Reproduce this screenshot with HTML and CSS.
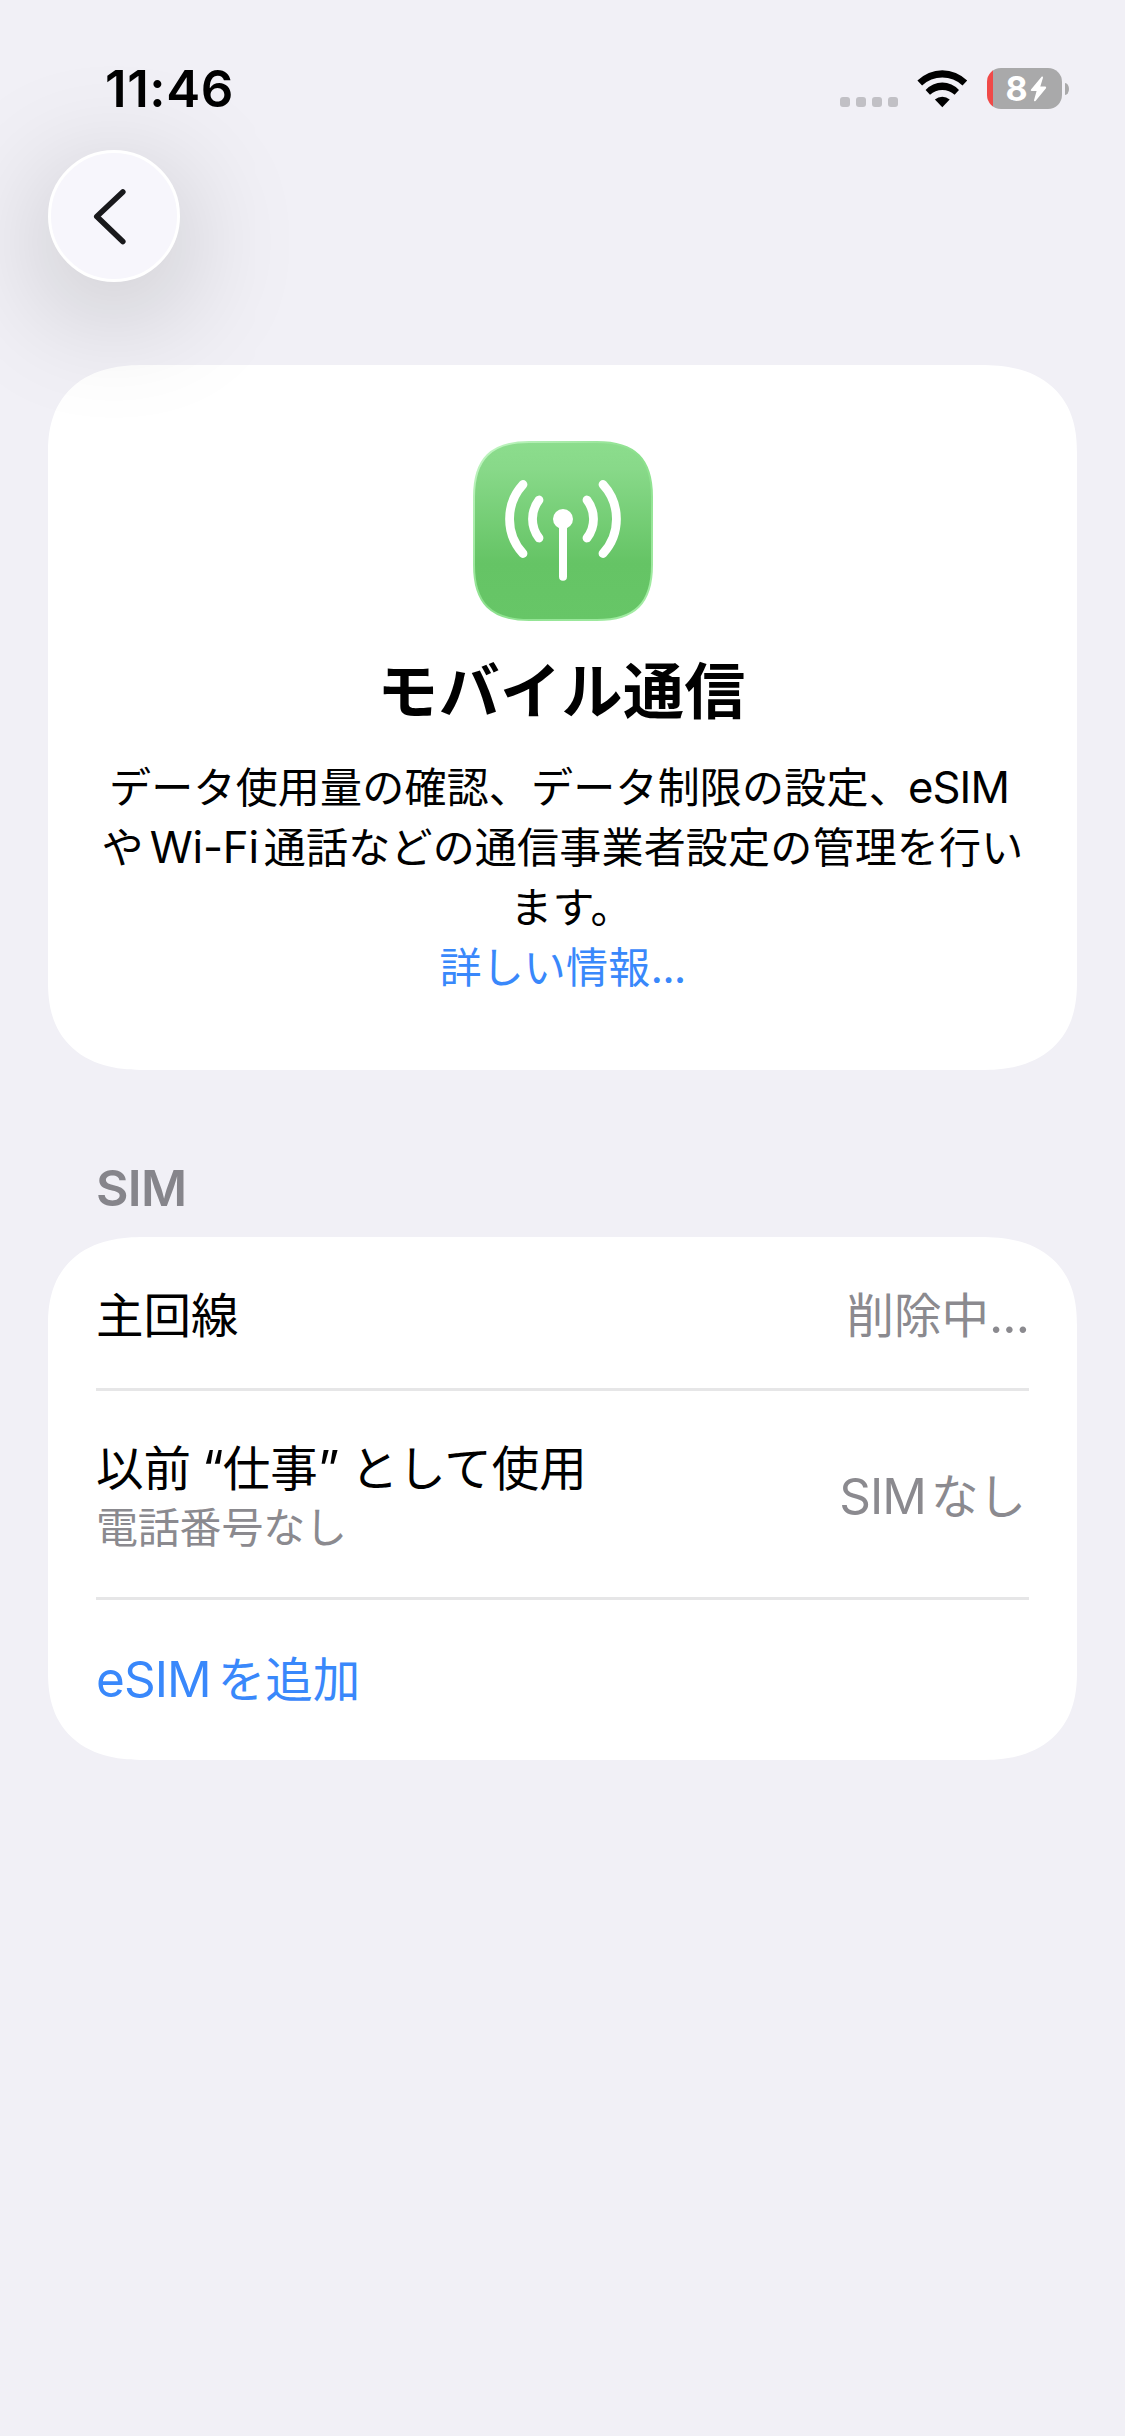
FILE: index.html
```html
<!DOCTYPE html>
<html lang="ja">
<head>
<meta charset="utf-8">
<title>モバイル通信</title>
<link rel="stylesheet" href="styles.css">
</head>
<body>
<header class="top">
  <div class="status">
    <time class="clock">11:46</time>
    <div class="indicators">
      <div class="dots"><i></i><i></i><i></i><i></i></div>
      <svg class="wifi" width="51" height="38" viewBox="0 0 51 38">
        <path d="M.4 10.6A35 35 0 0 1 50.2 10.6L45.5 15.4A29.5 29.5 0 0 0 5.1 15.4Z"/>
        <path d="M8.6 20A22.5 22.5 0 0 1 42 20L37.6 24.8A18 18 0 0 0 13 24.8Z"/>
        <path d="M17.9 29.4A12 12 0 0 1 32.7 29.4L25.3 37.2Z"/>
      </svg>
      <div class="battery">
        <div class="cell">
          <span class="level">8</span>
          <svg class="bolt" width="17" height="26" viewBox="0 0 17 26"><path d="M11.8.6 1 13.6Q.2 15 1.6 15.1H6.6L4 24.2Q4 26 5.5 25L16 12.2Q16.7 10.8 15.2 10.6H10.3L13 1.8Q13.2.2 11.8.6Z"/></svg>
        </div>
        <div class="nub"></div>
      </div>
    </div>
  </div>
  <nav class="nav">
    <button class="back" aria-label="戻る">
      <svg width="40" height="60" viewBox="0 0 40 60"><path d="M31.8 6 5.8 30.5l26 25"/></svg>
    </button>
  </nav>
</header>
<main>
  <section class="card hero">
    <svg class="app-icon" width="180" height="180" viewBox="0 0 180 180">
      <defs>
        <linearGradient id="green" x1="0" y1="0" x2="0" y2="1">
          <stop offset="0" stop-color="#8cdd8d"/><stop offset=".15" stop-color="#88d989"/>
          <stop offset=".68" stop-color="#65c465"/><stop offset="1" stop-color="#67c667"/>
        </linearGradient>
        <linearGradient id="rim" x1="0" y1="0" x2="1" y2="1">
          <stop offset="0" stop-color="#c5f6c6"/><stop offset=".5" stop-color="#8be08c"/><stop offset="1" stop-color="#a5eda6"/>
        </linearGradient>
      </defs>
      <path d="M56 1H124C162 1 179 18 179 56V124C179 162 162 179 124 179H56C18 179 1 162 1 124V56C1 18 18 1 56 1Z" fill="url(#green)" stroke="url(#rim)" stroke-width="2"/>
      <g fill="none" stroke="#fff" stroke-width="8.8" stroke-linecap="round">
        <path d="M50 43.5A51 51 0 0 0 50 112.5M66 59A31 31 0 0 0 66 97M114 59A31 31 0 0 1 114 97M130 43.5A51 51 0 0 1 130 112.5"/>
        <path d="M90 80V135.8" stroke-width="8"/>
      </g>
      <circle cx="90" cy="78" r="10" fill="#fff"/>
    </svg>
    <h1>モバイル通信</h1>
    <p class="about">データ使用量の確認、データ制限の設定、<span class="latin esim-word">eSIM</span><br>や<span class="latin wifi-word">Wi-Fi</span>通話などの通信事業者設定の管理を行い<br><span class="last">ます。</span><br><a class="link">詳しい情報<span class="latin">...</span></a></p>
  </section>
  <h2>SIM</h2>
  <section class="card list">
    <div class="row line">
      <span class="label">主回線</span>
      <span class="value">削除中<span class="latin">...</span></span>
    </div>
    <div class="row line tall">
      <div>
        <div class="label">以前<span class="latin open">“</span>仕事<span class="latin close">”</span>として使用</div>
        <div class="sub">電話番号なし</div>
      </div>
      <span class="value none"><span class="latin sim">SIM</span>なし</span>
    </div>
    <div class="row">
      <a class="link label"><span class="latin sim">eSIM</span>を追加</a>
    </div>
  </section>
</main>
</body>
</html>
```
FILE: styles.css
```css
* { box-sizing: border-box; margin: 0; }
body {
  min-height: 2436px;
  background: #f1f0f6;
  color: #000;
  font-family: "Noto Sans CJK JP", sans-serif;
  overflow: hidden;
}
.top { position: relative; z-index: 1; }
.status {
  height: 150px;
  padding: 0 56px 0 105px;
  display: flex;
  justify-content: space-between;
}
.clock {
  font: 600 51px/60px Inter, sans-serif;
  letter-spacing: .6px;
  margin-top: 59px;
}
.indicators {
  display: flex;
  align-items: flex-start;
  padding-top: 68px;
}
.dots { display: flex; gap: 6px; margin: 29px 19px 0 0; }
.dots i { width: 10px; height: 10px; border-radius: 3px; background: #c1c0c5; }
.wifi { margin: 2px 19px 0 0; }
.battery { display: flex; align-items: center; gap: 3px; }
.cell {
  width: 75px;
  height: 41px;
  border-radius: 14px;
  background: linear-gradient(90deg, #f04a48 6px, #a9a9aa 6px);
  display: flex;
  align-items: center;
  justify-content: center;
  gap: 2px;
  padding-left: 3px;
}
.level { font: 700 34px/41px Inter, sans-serif; color: #fff; }
.bolt { fill: #fff; }
.nub { width: 4px; height: 12px; border-radius: 0 4px 4px 0 / 0 6px 6px 0; background: #a9a9aa; }
.nav { padding-left: 48px; height: 215px; }
.back {
  width: 132px;
  height: 132px;
  padding: 0 7px 0 0;
  border: 3px solid #fff;
  border-radius: 50%;
  background: #f7f6fc;
  box-shadow: 0 26px 124px rgba(0, 0, 0, .23);
  display: flex;
  align-items: center;
  justify-content: center;
}
.back path { fill: none; stroke: #19191c; stroke-width: 5.6; stroke-linecap: round; stroke-linejoin: round; }
main { padding: 0 48px; }
.card { background: #fff; border-radius: 84px / 78px; }
@supports (corner-shape: superellipse(1.25)) {
  .card { border-radius: 96px / 88px; corner-shape: superellipse(1.25); }
}
.hero {
  height: 705px;
  padding-top: 76px;
  display: flex;
  flex-direction: column;
  align-items: center;
}
.app-icon { flex: none; }
h1 { margin: 22px 2px 0 0; font-size: 61px; line-height: 90px; font-weight: 700; letter-spacing: .4px; }
.about {
  margin-top: 22px;
  font-size: 42px;
  line-height: 60px;
  letter-spacing: .2px;
  text-align: center;
  white-space: nowrap;
}
.latin { font-family: Inter, sans-serif; font-size: 1.04em; letter-spacing: -.9px; line-height: 1; }
.esim-word { margin: 0 7px 0 -3px; }
.wifi-word { margin: 0 5px 0 6px; letter-spacing: -.2px; }
.last { margin-left: 18px; }
.link { color: #3988fb; }
h2 {
  margin: 88px 0 0 48px;
  height: 79px;
  font: 600 50px/60px Inter, sans-serif;
  letter-spacing: -.7px;
  color: #86858b;
}
.list { height: 523px; padding: 0 48px; }
.row { height: 154px; display: flex; align-items: center; justify-content: space-between; }
.line { border-bottom: 3px solid #e6e6e7; }
.tall { height: 209px; }
.label, .value { font-size: 47.5px; line-height: 62px; white-space: nowrap; }
.value { color: #8b8a8f; }
.none { padding-right: 3px; }
.none .sim { margin-right: 5px; }
.sub { font-size: 42px; line-height: 56px; letter-spacing: -.2px; color: #8b8a8f; }
.sim { margin-right: 7px; }
.open { margin-left: 11px; }
.close { margin-right: 12px; }
```
